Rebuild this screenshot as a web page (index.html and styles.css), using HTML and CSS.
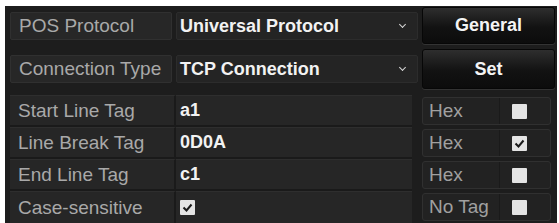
FILE: index.html
```html
<!DOCTYPE html>
<html lang="en">
<head>
<meta charset="UTF-8" />
<title>POS Settings</title>
<link rel="stylesheet" href="styles.css">
</head>
<body>

<section class="posPanel">
  <div class="topGrid">
    <div class="fieldLabel">POS Protocol</div>
    <div class="selectBox">Universal Protocol <span class="chevron"></span></div>
    <button class="panelButton">General</button>

    <div class="fieldLabel">Connection Type</div>
    <div class="selectBox">TCP Connection <span class="chevron"></span></div>
    <button class="panelButton">Set</button>
  </div>

  <div class="tagGrid">
    <div class="tagLabel">Start Line Tag</div>
    <div class="tagValue">a1</div>
    <div class="hexCell"><span class="hexText">Hex</span><span class="hexBox"><span class="checkBox"></span></span></div>

    <div class="tagLabel">Line Break Tag</div>
    <div class="tagValue">0D0A</div>
    <div class="hexCell"><span class="hexText">Hex</span><span class="hexBox"><span class="checkBox"><svg viewBox="0 0 15 15"><polyline points="3.5,7.5 6.5,10.5 11.5,4.5" /></svg></span></span></div>

    <div class="tagLabel">End Line Tag</div>
    <div class="tagValue">c1</div>
    <div class="hexCell"><span class="hexText">Hex</span><span class="hexBox"><span class="checkBox"></span></span></div>

    <div class="tagLabel lastRow">Case-sensitive</div>
    <div class="tagValue lastRow"><span class="checkBox"><svg viewBox="0 0 15 15"><polyline points="3.5,7.5 6.5,10.5 11.5,4.5" /></svg></span></div>
    <div class="hexCell"><span class="hexText">No Tag</span><span class="hexBox"><span class="checkBox"></span></span></div>
  </div>
</section>

</body>
</html>
```

FILE: styles.css
```css
body {
  margin: 0;
  background: #ffffff;
  font-family: "Liberation Sans", Arial, sans-serif;
}

.posPanel {
  margin: 6px 2px 0 5px;
  height: 217px;
  background-color: #1d1d1d;
  padding: 1px 2px 0 5px;
  box-sizing: border-box;
}

.topGrid, .tagGrid {
  display: grid;
  grid-template-columns: 162px 242px 133px;
  column-gap: 4px;
}

.topGrid {
  grid-template-rows: 37px 40px;
  row-gap: 5px;
}

.fieldLabel {
  align-self: center;
  height: 26px;
  line-height: 26px;
  padding-left: 8px;
  font-size: 19px;
  color: #a9a9a9;
  background-color: #272727;
  border: 1px solid #303030;
  border-radius: 2px;
}

.selectBox {
  align-self: center;
  position: relative;
  height: 26px;
  line-height: 26px;
  padding-left: 3px;
  font-size: 18px;
  font-weight: bold;
  color: #f2f2f2;
  background-color: #242424;
  border: 1px solid #2c2c2c;
  border-radius: 2px;
}

.chevron {
  position: absolute;
  right: 12px;
  top: 9px;
  width: 4px;
  height: 4px;
  border-right: 1.5px solid #d8d8d8;
  border-bottom: 1.5px solid #d8d8d8;
  transform: rotate(45deg);
}

.panelButton {
  font-family: "Liberation Sans", Arial, sans-serif;
  font-size: 18px;
  font-weight: bold;
  color: #f4f4f4;
  background: linear-gradient(#2e2e2e, #121212 55%, #0c0c0c);
  border: 1px solid #070707;
  border-radius: 3px;
  box-shadow: 0 1px 0 #333;
}

.tagGrid {
  margin-top: 6px;
  grid-auto-rows: 32px;
}

.tagLabel, .tagValue {
  display: flex;
  align-items: center;
  font-size: 19px;
  background-color: #262626;
  border-bottom: 2px solid #1a1a1a;
  border-top: 1px solid #2e2e2e;
}

.tagLabel {
  padding-left: 8px;
  color: #a9a9a9;
  margin-right: -4px;
  border-right: 2px solid #1a1a1a;
}

.tagValue {
  padding-left: 4px;
  color: #f2f2f2;
  font-size: 18px;
  font-weight: bold;
  margin-right: 6px;
}

.lastRow {
  border-bottom: none;
}

.hexCell {
  display: flex;
  margin: 2px 4px 2px 0;
  background-color: #222;
  border: 1px solid #303030;
  border-radius: 3px;
}

.hexText {
  width: 70px;
  padding-left: 6px;
  line-height: 26px;
  font-size: 19px;
  color: #a0a0a0;
  border-right: 1px solid #1a1a1a;
}

.hexBox {
  flex: 1;
  display: flex;
  align-items: center;
  padding-left: 12px;
}

.checkBox {
  display: inline-block;
  width: 15px;
  height: 15px;
  background-color: #e4e4e4;
  border-radius: 1px;
}

.checkBox svg {
  display: block;
  width: 15px;
  height: 15px;
  fill: none;
  stroke: #1a1a1a;
  stroke-width: 2;
}
```
